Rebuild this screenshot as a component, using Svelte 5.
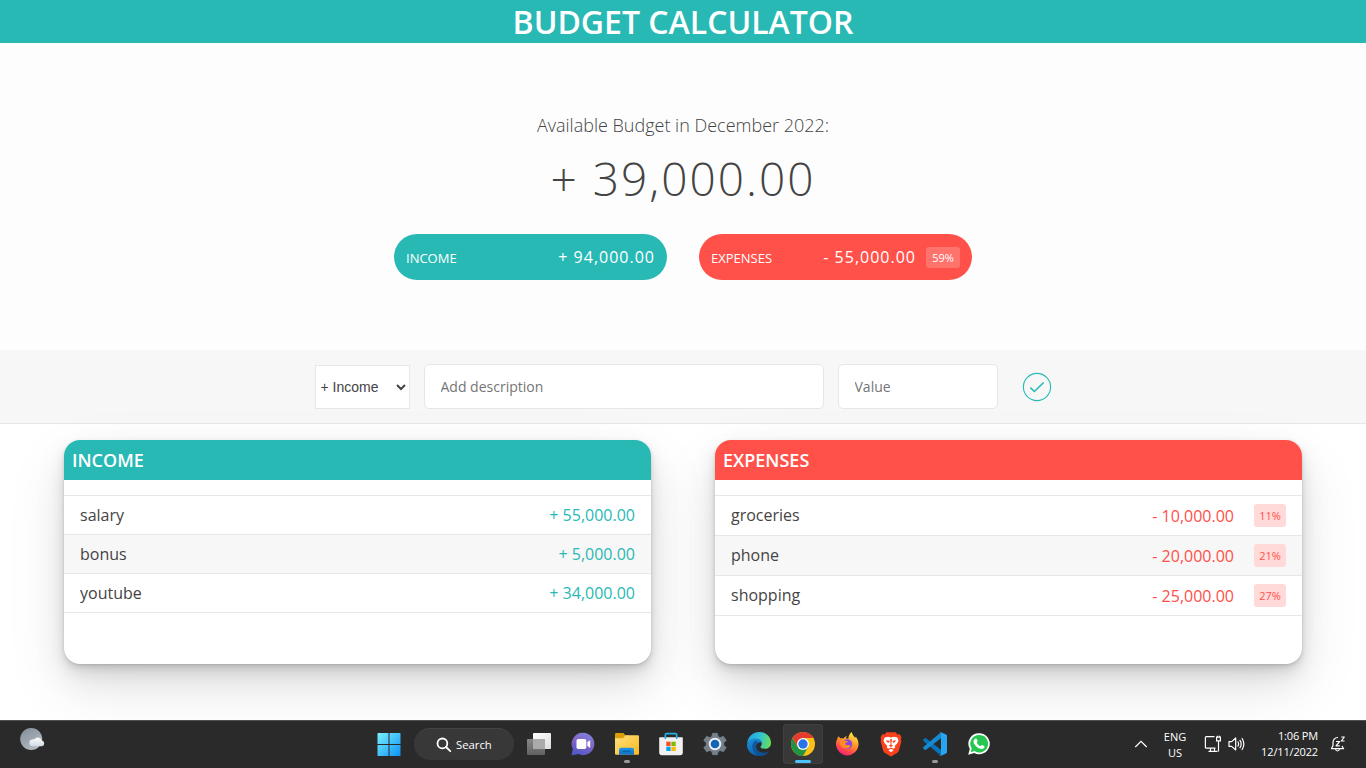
<script>
  const income = [
    { name: 'salary', amount: '+ 55,000.00' },
    { name: 'bonus', amount: '+ 5,000.00' },
    { name: 'youtube', amount: '+ 34,000.00' }
  ];
  const expenses = [
    { name: 'groceries', amount: '- 10,000.00', share: '11%' },
    { name: 'phone', amount: '- 20,000.00', share: '21%' },
    { name: 'shopping', amount: '- 25,000.00', share: '27%' }
  ];
</script>

<div class="screen">
  <h1>BUDGET CALCULATOR</h1>

  <section class="summary">
    <p class="month">Available Budget in December 2022:</p>
    <p class="total">+ 39,000.00</p>
    <div class="pills">
      <div class="pill inc">
        <span class="label">INCOME</span>
        <span class="value">+ 94,000.00</span>
      </div>
      <div class="pill exp">
        <span class="label">EXPENSES</span>
        <span class="value">- 55,000.00</span>
        <span class="pct">59%</span>
      </div>
    </div>
  </section>

  <form class="add">
    <select><option>+ Income</option><option>- Expense</option></select>
    <input class="desc" type="text" placeholder="Add description" />
    <input class="val" type="text" placeholder="Value" />
    <button type="button" aria-label="Add">
      <svg width="30" height="30" viewBox="0 0 30 30" fill="none" stroke="#28b9b5">
        <circle cx="15" cy="15" r="13.6" stroke-width="1.1" />
        <path d="M8.3 15.6l4.1 3.9 9.2-9" stroke-width="1.6" />
      </svg>
    </button>
  </form>

  <main>
    <section class="card inc">
      <h2>INCOME</h2>
      <ul>
        {#each income as item}
          <li><span class="name">{item.name}</span><span class="amount">{item.amount}</span></li>
        {/each}
      </ul>
    </section>
    <section class="card exp">
      <h2>EXPENSES</h2>
      <ul>
        {#each expenses as item}
          <li>
            <span class="name">{item.name}</span>
            <span class="amount">{item.amount}</span>
            <span class="share">{item.share}</span>
          </li>
        {/each}
      </ul>
    </section>
  </main>

  <footer>
    <div class="weather">
      <svg width="26" height="26" viewBox="0 0 26 26">
        <defs>
          <linearGradient id="moon" x1="0" y1="0" x2="0.6" y2="1"><stop stop-color="#7f8c98" /><stop offset="1" stop-color="#b3bac1" /></linearGradient>
          <linearGradient id="cloud" x1="0" y1="0" x2="0" y2="1"><stop stop-color="#fff" /><stop offset="1" stop-color="#d3dae4" /></linearGradient>
        </defs>
        <circle cx="12.2" cy="12" r="11" fill="url(#moon)" />
        <path d="M14 19.200a3.400 3.400 0 0 1-.4-6.800c.6-.1 1.100 0 1.600.1a4.200 4.200 0 0 1 7.700 1 2.900 2.900 0 0 1-.1 5.700z" fill="url(#cloud)" />
      </svg>
    </div>

    <div class="apps">
      <span class="tile start">
        <svg width="24" height="24" viewBox="0 0 24 24">
          <defs><linearGradient id="win" x1="0" y1="0" x2="1" y2="1"><stop stop-color="#7df0ff" /><stop offset="1" stop-color="#0a93f5" /></linearGradient></defs>
          <path d="M.5 1.500A.5.5 0 0 1 1 1h10.500v11H.5zM12.500 1H23a.5.5 0 0 1 .5.5V12h-11zM.5 13h11v11H1a.5.5 0 0 1-.5-.5zM12.500 13h11v10.500a.5.5 0 0 1-.5.5H12.500z" fill="url(#win)" />
        </svg>
      </span>
      <span class="search">
        <svg width="16" height="16" viewBox="0 0 16 16" fill="none" stroke="#fff" stroke-width="1.800" stroke-linecap="round">
          <circle cx="6.400" cy="6.400" r="4.900" /><path d="M10 10l4.300 4.200" />
        </svg>
        <span>Search</span>
      </span>

      <!-- Task view -->
      <span class="tile">
        <svg width="26" height="26" viewBox="0 0 26 26">
          <defs>
            <linearGradient id="tvl" x1="0" y1="0" x2="1" y2="1"><stop stop-color="#fff" /><stop offset="1" stop-color="#ddd" /></linearGradient>
            <linearGradient id="tvd" x1="0" y1="0" x2="0" y2="1"><stop stop-color="#888" /><stop offset="1" stop-color="#606060" /></linearGradient>
          </defs>
          <rect x="7" y="2" width="18" height="16" rx=".8" fill="url(#tvl)" />
          <rect x="1" y="8" width="18" height="16" rx=".8" fill="url(#tvd)" />
          <path d="M7 8h12v10H7z" fill="#aaa" />
        </svg>
      </span>

      <!-- Chat -->
      <span class="tile">
        <svg width="26" height="26" viewBox="0 0 26 26">
          <defs><linearGradient id="chat" x1=".7" y1="0" x2=".3" y2="1"><stop stop-color="#7d82dc" /><stop offset=".45" stop-color="#8466c4" /><stop offset="1" stop-color="#5059c9" /></linearGradient></defs>
          <path d="M13.300 1.800a11.200 11.200 0 1 1-5 21.300L2.500 24.200a.8.8 0 0 1-.9-1l1.300-5A11.200 11.200 0 0 1 13.300 1.800z" fill="url(#chat)" />
          <rect x="6.500" y="8" width="9.800" height="10" rx="1.800" fill="#fff" />
          <path d="M17.300 11.300l2-1.700c.5-.4.900-.2.900.4v6c0 .6-.4.8-.9.4l-2-1.700z" fill="#fff" />
        </svg>
      </span>

      <!-- File explorer -->
      <span class="tile">
        <svg width="26" height="26" viewBox="0 0 26 26">
          <defs>
            <linearGradient id="fold" x1="0" y1="0" x2="1" y2="1"><stop stop-color="#ffe083" /><stop offset="1" stop-color="#fcb91c" /></linearGradient>
            <linearGradient id="pocket" x1="0" y1="0" x2="0" y2="1"><stop stop-color="#1b98e8" /><stop offset="1" stop-color="#1270c4" /></linearGradient>
          </defs>
          <path d="M1 3.200A1.200 1.200 0 0 1 2.200 2h7.200l2.300 2.500H15V8H1z" fill="#dba008" />
          <path d="M1 7.200h8l2.500-3H24a1 1 0 0 1 1 1v17.500a1 1 0 0 1-1 1H2a1 1 0 0 1-1-1z" fill="url(#fold)" />
          <path d="M5 23.700v-5a2 2 0 0 1 2-2h11a2 2 0 0 1 2 2v5z" fill="url(#pocket)" />
          <path d="M8.500 19.600h8v1.300h-8z" fill="#0760ac" />
        </svg>
        <i class="dot"></i>
      </span>

      <!-- Store -->
      <span class="tile">
        <svg width="26" height="26" viewBox="0 0 26 26">
          <path d="M1.700 6.300h22.600a.5.5 0 0 1 .5.5v14.800a2.700 2.700 0 0 1-2.700 2.700H3.900a2.700 2.700 0 0 1-2.700-2.700V6.800a.5.500 0 0 1 .5-.5z" fill="#f1f1f1" />
          <path d="M7.300 8V4a1.300 1.300 0 0 1 1.300-1.300h8.800A1.300 1.300 0 0 1 18.700 4v4" fill="none" stroke="#22aee8" stroke-width="1.700" />
          <path d="M8.300 10.700h4.300v4.300H8.300z" fill="#f25022" /><path d="M13.400 10.700h4.300v4.300h-4.300z" fill="#7fba00" />
          <path d="M8.300 15.700h4.300v4.300H8.300z" fill="#00a4ef" /><path d="M13.400 15.700h4.300v4.300h-4.300z" fill="#ffb900" />
        </svg>
      </span>

      <!-- Settings -->
      <span class="tile">
        <svg width="26" height="26" viewBox="0 0 26 26">
          <path d="M10.700 2.400h4.600l.8 3.200 2 1.100 3.300-1.300 2.700 4-2.400 2.400v2.400l2.400 2.400-2.700 4-3.300-1.200-2 1.100-.8 3.100h-4.600l-.8-3.100-2-1.100-3.300 1.200-2.700-4 2.400-2.400v-2.400L1.900 9.400l2.700-4 3.300 1.300 2-1.100z" fill="#75808a" stroke="#75808a" stroke-width="1" stroke-linejoin="round" />
          <circle cx="13" cy="13" r="5.300" fill="#1465b8" stroke="#edf1f5" stroke-width="1.900" />
        </svg>
      </span>

      <!-- Edge -->
      <span class="tile">
        <svg width="26" height="26" viewBox="0 0 26 26">
          <defs>
            <linearGradient id="edgeTop" x1="0" y1=".3" x2="1" y2=".5"><stop stop-color="#269fe0" /><stop offset=".5" stop-color="#2fc2d6" /><stop offset="1" stop-color="#68dd58" /></linearGradient>
            <linearGradient id="edgeLow" x1="0" y1="0" x2=".6" y2="1"><stop stop-color="#1b95df" /><stop offset="1" stop-color="#0c59a4" /></linearGradient>
          </defs>
          <path d="M1.200 12C2 5.300 7 1 13.300 1 20.300 1 25 6.200 25 11.800c0 4-2.700 6-6.200 6-2.800 0-4.300-1-4.300-1.900 0-.8 1.300-1.200 1.300-3.400 0-2.500-2.300-4.600-6.300-4.600-4 0-7 2-8.300 4.100z" fill="url(#edgeTop)" />
          <path d="M1 13.500C1.300 9.700 5 7.500 9 7.500c4.300 0 6.800 2.300 6.800 5-1.100-1.900-5.800-1.300-5.800 3 0 4 4 6.300 7.800 6.300 2 0 3.700-.5 5-1.300-2 2.900-5.500 4.700-9.500 4.500C6.500 25 .7 20 1 13.500z" fill="url(#edgeLow)" />
          <path d="M9.800 9.200c-3.200 2-4.600 6.300-2.500 10.300 1.300 2.700 3.500 4.700 6.200 5.500 4 .1 7.400-1.700 9.300-4.500-1.300.8-3 1.300-5 1.300-3.800 0-7.800-2.300-7.800-6.300 0-2 1-3.200 2.200-3.800z" fill="#114a8b" opacity=".7" />
        </svg>
      </span>

      <!-- Chrome -->
      <span class="tile active">
        <svg width="26" height="26" viewBox="0 0 26 26">
          <circle cx="13" cy="13" r="12" fill="#fbc116" />
          <path d="M2.600 7A12 12 0 0 0 13 25l5.200-9L13 13 7.800 16z" fill="#229342" />
          <path d="M2.600 7a12 12 0 0 1 20.800 0H13z" fill="#e33b2e" /><path d="M2.600 7L7.800 16 13 7z" fill="#e33b2e" />
          <circle cx="13" cy="13" r="6" fill="#fff" /><circle cx="13" cy="13" r="4.700" fill="#2874e8" />
        </svg>
        <i class="bar"></i>
      </span>

      <!-- Firefox -->
      <span class="tile">
        <svg width="26" height="26" viewBox="0 0 26 26">
          <defs>
            <linearGradient id="fox" x1=".8" y1="0" x2=".3" y2="1"><stop stop-color="#fff14a" /><stop offset=".45" stop-color="#ff9628" /><stop offset=".8" stop-color="#ff4052" /><stop offset="1" stop-color="#ea2085" /></linearGradient>
          </defs>
          <path d="M4.800 5.300c.4 1 1 1.600 1.800 2.200 1-.3 2-.2 3 .1C10.500 6 12 5.300 13 5c-.9.9-1.200 1.700-1.200 2.300l2.500.5C14.500 5 15.500 2.500 17.800 1c.2 2.700 2.200 4.300 3.500 6l.3-1.500c2 2.100 3.100 5 2.900 8.500A11.300 11.300 0 0 1 2 14.300c-.2-3 .3-4.200 1-5.800.2-1.400.9-2.400 1.800-3.200z" fill="url(#fox)" />
          <circle cx="13.300" cy="13" r="4.800" fill="#8747df" />
          <path d="M5.500 10c2-1.500 4.500-1.200 6-.1l2.700.3c-.3 1.500-2.700 1.400-3 2.300-.2 1 1.300 2 3 1.600 1.700-.5 2.600.6 1.500 1.800-2.500 2.700-8.700 1.200-9.500-3z" fill="#ff8b26" />
        </svg>
      </span>

      <!-- Brave -->
      <span class="tile">
        <svg width="26" height="26" viewBox="0 0 26 26">
          <path d="M8.500 1.300h9l2 2.200 2.300-.3 1.700 3.300-.6 2 .5 2-2.700 9.400c-.3 1-1 1.600-1.800 2.200L14 25q-1 .5-2 0l-4.900-2.900c-.8-.6-1.500-1.200-1.800-2.200L2.600 10.500l.5-2-.6-2 1.700-3.300 2.300.3z" fill="#f9411e" />
          <path d="M10 5.800l3 .7 3-.7 3.300.7 1.200 3-1 2.500-2.700 3 .3 1.800-1.500.9L13 16.400l-2.600 1.300-1.500-.9.300-1.800-2.700-3-1-2.500 1.200-3z" fill="#fff" />
          <path d="M7.700 9.200l3.600.6.3 1-1.500 1.200zM18.300 9.200l-3.600.6-.3 1 1.500 1.200zM12.100 8h1.800l-.5 5.500 1.600 1.200-2 1.200-2-1.200 1.600-1.200z" fill="#f9411e" />
          <path d="M10.400 19.200l2.600-1.500 2.600 1.500-2.600 2z" fill="#fff" />
        </svg>
      </span>

      <!-- VS Code -->
      <span class="tile">
        <svg width="26" height="26" viewBox="0 0 26 26">
          <path d="M1.300 8.500l1.500-1.300q.6-.5 1.200 0L19 18.800v6L1.300 10q-.6-.8 0-1.500z" fill="#0672b9" />
          <path d="M1.300 17.500l1.500 1.300q.6.500 1.200 0L19 7.200v-6L1.300 16q-.6.800 0 1.500z" fill="#1688d0" />
          <path d="M18.500 1l5.600 2.500q.9.400.9 1.400v16.200q0 1-.9 1.400L18.500 25q-1 .3-1.700-.6 1.900 1 2.200-.9v-21q-.3-1.900-2.200-.9.700-.9 1.700-.6z" fill="#29a5ef" />
        </svg>
        <i class="dot"></i>
      </span>

      <!-- WhatsApp -->
      <span class="tile">
        <svg width="26" height="26" viewBox="0 0 26 26">
          <path d="M13.200 2.200a10.500 10.500 0 1 1-5 19.700L2.200 23.700l1.600-5.800a10.500 10.500 0 0 1 9.400-15.700z" fill="#fff" />
          <path d="M13.200 3.900a8.800 8.800 0 1 1-4.700 16.200l-3.900 1.200 1.100-3.800A8.800 8.800 0 0 1 13.200 3.900z" fill="#25c750" />
          <path d="M9.200 7.800c.7-.5 1.300-.4 1.600.3l.8 1.800c.2.600-.6 1.300-.9 1.700.9 1.700 2.100 2.800 3.900 3.600.5-.5 1-1.400 1.500-1.200l2.100 1.100c.5.300.3 1.400-.2 2-1.400 1.500-3.600 1-5.700-.1-2.500-1.300-4.500-3.800-4.800-6 0-1.400.8-2.500 1.700-3.200z" fill="#fff" />
        </svg>
      </span>
    </div>

    <div class="tray">
      <svg class="chev" width="14" height="10" viewBox="0 0 14 10" fill="none" stroke="#fff" stroke-width="1.200"><path d="M1.300 8L7 2.300 12.700 8" /></svg>
      <span class="lang">ENG<br />US</span>
      <svg class="net" width="18" height="18" viewBox="0 0 18 18" fill="none" stroke="#fff" stroke-width="1.200">
        <path d="M10.500 1.600H2.300a.9.900 0 0 0-.9.900v9.700a.9.900 0 0 0 .9.900h9.200M4.500 16.400h9M6.500 13v3M10.500 13v3" />
        <path d="M12.600 2.200h3.800v3.600h-3.800zM14.500 6v10.500M13.500.7v1.500M15.500.7v1.500" />
      </svg>
      <svg class="vol" width="18" height="16" viewBox="0 0 18 16" fill="none" stroke="#fff" stroke-width="1.200" stroke-linejoin="round" stroke-linecap="round">
        <path d="M1 5.600h2.700L7.700 2v12L3.700 10.400H1z" /><path d="M10 6q1.200 2 0 4M12 4.300q2.400 3.700 0 7.400M14.100 2.500q3.500 5.500 0 11" />
      </svg>
      <span class="clock">1:06 PM<br />12/11/2022</span>
      <svg class="bell" width="16" height="18" viewBox="0 0 16 18" fill="none" stroke="#fff" stroke-width="1.200" stroke-linejoin="round">
        <path d="M8 2.500C5 2.400 3 4.500 3 7.500v3L1.400 13.700h12.200L12 11M5.500 14q.4 2 2 2t2-2" />
        <path d="M6 6.500h3.600L6 10.800h3.800M11.300 2h3l-3 4h3.200" />
      </svg>
    </div>
  </footer>
</div>

<style>
  :global(body) { background: #fff; overflow: hidden; }
  .screen {
    width: 1366px; height: 768px; display: flex; flex-direction: column;
    font-family: "Open Sans", sans-serif; color: #444; box-sizing: border-box;
  }
  .screen * { box-sizing: border-box; }
  h1 {
    margin: 0; height: 43px; line-height: 44px; flex: none; text-align: center;
    background: #28b9b5; color: #fff; font-size: 32px; font-weight: 600;
  }
  .summary { height: 307px; flex: none; background: #fdfdfd; padding-top: 70px; text-align: center; }
  .summary p { margin: 0; font-weight: 300; }
  .month { font-size: 18px; line-height: 25px; }
  .total { font-size: 46px; line-height: 63px; letter-spacing: 2px; padding-top: 9px; height: 96px; }
  .pills { display: flex; justify-content: center; gap: 32px; }
  .pill {
    width: 273px; height: 46px; border-radius: 23px; padding: 0 12px;
    display: flex; align-items: center; color: #fff;
  }
  .pill.inc { background: #28b9b5; }
  .pill.exp { background: #ff5049; }
  .label { font-size: 13px; flex: 1; text-align: left; padding-top: 1px; }
  .value { font-size: 16px; letter-spacing: 1px; }
  .pct {
    width: 34px; height: 21px; line-height: 21px; margin-left: 10px; border-radius: 3px;
    font-size: 11px; background: rgba(255, 255, 255, 0.2); font-weight: 500;
  }
  .add {
    height: 74px; flex: none; background: #f7f7f7; border-bottom: 1px solid #e7e7e7;
    display: flex; align-items: center; justify-content: center;
  }
  select {
    width: 95px; height: 44px; border: 1px solid #e7e7e7; border-radius: 0; background: #fff;
    font: 14px "Liberation Sans", Arial, sans-serif; color: #444; margin: 1px 14px 0 0; padding: 0 0 0 1px;
  }
  input {
    height: 45px; border: 1px solid #e7e7e7; border-radius: 5px; background: #fff;
    font: 14px "Open Sans", sans-serif; padding: 0 16px; margin: 0 14px 0 0;
  }
  input::placeholder { color: #757575; }
  .desc { width: 400px; }
  .val { width: 160px; margin-right: 24px; }
  button { border: 0; background: none; padding: 0; width: 30px; height: 30px; }
  button svg { display: block; }
  main { height: 296px; flex: none; display: flex; gap: 64px; padding: 16px 64px 0; }
  .card {
    flex: 1; height: 224px; border-radius: 16px; background: #fff;
    box-shadow: rgba(0, 0, 0, 0.07) 0 1px 2px, rgba(0, 0, 0, 0.07) 0 2px 4px,
      rgba(0, 0, 0, 0.07) 0 4px 8px, rgba(0, 0, 0, 0.07) 0 8px 16px,
      rgba(0, 0, 0, 0.08) 0 16px 32px, rgba(0, 0, 0, 0.09) 0 24px 64px;
  }
  h2 {
    margin: 0; height: 40px; line-height: 41px; padding-left: 8px; border-radius: 16px 16px 0 0;
    color: #fff; font-size: 18px; font-weight: 600;
  }
  .inc h2 { background: #28b9b5; }
  .exp h2 { background: #ff5049; }
  ul { list-style: none; margin: 15px 0 0; padding: 0; border-top: 1px solid #e7e7e7; }
  li {
    height: 39px; border-bottom: 1px solid #e7e7e7; padding: 0 16px;
    display: flex; align-items: center; font-size: 16px;
  }
  .exp li { height: 40px; }
  li:nth-child(even) { background: #f7f7f7; }
  .name { flex: 1; }
  .exp .name { padding-bottom: 1px; }
  .amount { color: #28b9b5; font-weight: 400; }
  .exp .amount { color: #ff5049; padding-top: 1px; }
  .share {
    width: 32px; height: 23px; line-height: 24px; text-align: center; margin-left: 20px;
    font-size: 11px; border-radius: 3px; background: #ffdad9; color: #ff5049;
  }
  footer {
    height: 48px; flex: none; background: #2a2a2a; box-shadow: inset 0 1px #505050;
    position: relative; display: flex; color: #fff;
  }
  footer svg { display: block; flex: none; }
  .weather { width: 368px; padding: 7px 0 0 19px; }
  .apps { display: flex; align-items: center; width: 631px; }
  .tile { width: 40px; height: 40px; margin-right: 4px; border-radius: 4px; display: grid; place-items: center; position: relative; flex: none; }
  .tile.start { margin-right: 6px; padding-left: 1px; }
  .tile.active { background: #383838; box-shadow: 0 0 0 1px #404040 inset; }
  .search {
    width: 100px; height: 32px; margin-right: 5px; border-radius: 16px; background: #383838; flex: none;
    display: flex; align-items: center; gap: 4px; padding-left: 22px; border-top: 1px solid #444;
    font-size: 11.3px; font-weight: 500;
  }
  .dot, .bar { position: absolute; left: 17px; bottom: 1px; width: 6px; height: 3px; border-radius: 2px; background: #9a9a9a; }
  .bar { left: 12px; width: 16px; background: #4cc2ff; }
  .tray { flex: 1; display: flex; align-items: center; justify-content: flex-end; padding-right: 20px; font-size: 11px; line-height: 16px; font-weight: 500; }
  .lang { text-align: center; width: 28px; margin-right: 15px; padding-top: 1px; }
  .chev { margin-right: 13px; }
  .net { margin-right: 6px; }
  .vol { margin-right: 11px; }
  .clock { text-align: right; width: 61px; margin-right: 12px; white-space: nowrap; letter-spacing: -0.15px; }
</style>
